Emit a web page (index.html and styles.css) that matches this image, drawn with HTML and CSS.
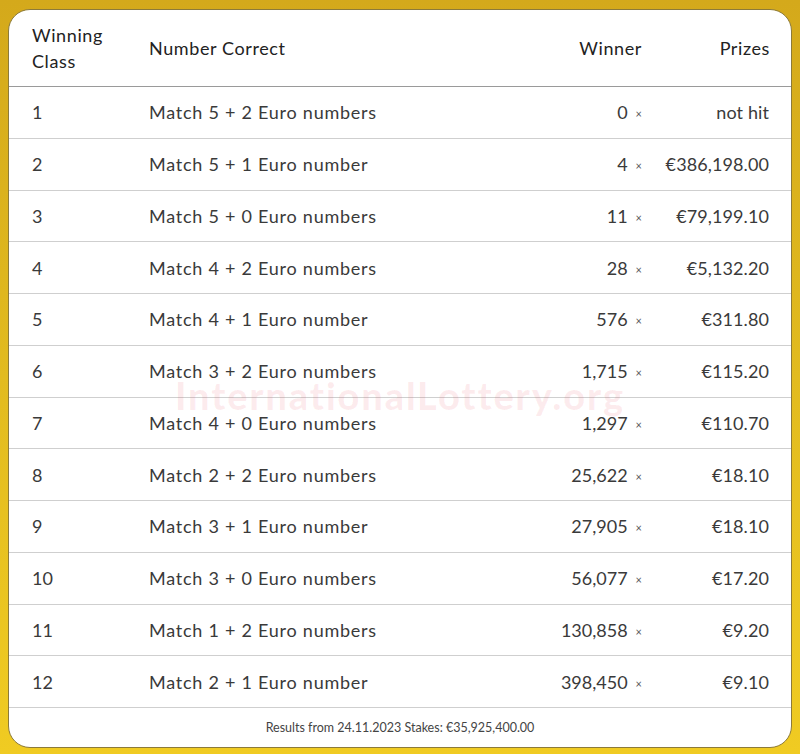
FILE: index.html
```html
<!DOCTYPE html>
<html lang="en">
<head>
<meta charset="utf-8">
<title>EuroJackpot Results</title>
<link rel="stylesheet" href="styles.css">
</head>
<body>
<div class="card">
  <table class="prizes">
    <colgroup>
      <col class="c-class"><col class="c-num"><col class="c-win"><col class="c-prize">
    </colgroup>
    <thead>
      <tr>
        <th class="cls">Winning<br>Class</th>
        <th class="num">Number Correct</th>
        <th class="win">Winner</th>
        <th class="prize">Prizes</th>
      </tr>
    </thead>
    <tbody>
      <tr><td class="cls">1</td><td class="num">Match 5 + 2 Euro numbers</td><td class="win">0<span class="x">×</span></td><td class="prize">not hit</td></tr>
      <tr><td class="cls">2</td><td class="num">Match 5 + 1 Euro number</td><td class="win">4<span class="x">×</span></td><td class="prize">€386,198.00</td></tr>
      <tr><td class="cls">3</td><td class="num">Match 5 + 0 Euro numbers</td><td class="win">11<span class="x">×</span></td><td class="prize">€79,199.10</td></tr>
      <tr><td class="cls">4</td><td class="num">Match 4 + 2 Euro numbers</td><td class="win">28<span class="x">×</span></td><td class="prize">€5,132.20</td></tr>
      <tr><td class="cls">5</td><td class="num">Match 4 + 1 Euro number</td><td class="win">576<span class="x">×</span></td><td class="prize">€311.80</td></tr>
      <tr><td class="cls">6</td><td class="num">Match 3 + 2 Euro numbers</td><td class="win">1,715<span class="x">×</span></td><td class="prize">€115.20</td></tr>
      <tr><td class="cls">7</td><td class="num">Match 4 + 0 Euro numbers</td><td class="win">1,297<span class="x">×</span></td><td class="prize">€110.70</td></tr>
      <tr><td class="cls">8</td><td class="num">Match 2 + 2 Euro numbers</td><td class="win">25,622<span class="x">×</span></td><td class="prize">€18.10</td></tr>
      <tr><td class="cls">9</td><td class="num">Match 3 + 1 Euro number</td><td class="win">27,905<span class="x">×</span></td><td class="prize">€18.10</td></tr>
      <tr><td class="cls">10</td><td class="num">Match 3 + 0 Euro numbers</td><td class="win">56,077<span class="x">×</span></td><td class="prize">€17.20</td></tr>
      <tr><td class="cls">11</td><td class="num">Match 1 + 2 Euro numbers</td><td class="win">130,858<span class="x">×</span></td><td class="prize">€9.20</td></tr>
      <tr><td class="cls">12</td><td class="num">Match 2 + 1 Euro number</td><td class="win">398,450<span class="x">×</span></td><td class="prize">€9.10</td></tr>
    </tbody>
  </table>
  <div class="foot">Results from 24.11.2023 Stakes: €35,925,400.00</div>
  <div class="watermark">InternationalLottery.org</div>
</div>
</body>
</html>
```

FILE: styles.css
```css
html, body {
  margin: 0;
  height: 100%;
}
body {
  background: linear-gradient(180deg, #d4a91b 0%, #e2bb1f 50%, #f0cb22 100%);
  padding: 9px 8px 6px 8px;
  box-sizing: border-box;
  font-family: Lato, "Open Sans", sans-serif;
  color: #333;
}
.card {
  position: relative;
  background: #fff;
  border: 1px solid #8c7a3a;
  border-radius: 22px;
  overflow: hidden;
  height: 739px;
  box-sizing: border-box;
}
.prizes {
  width: 100%;
  border-collapse: collapse;
  table-layout: fixed;
  font-size: 18px;
}
.c-class { width: 140px; }
.c-num { width: auto; }
.c-win { width: 160px; }
.c-prize { width: 139px; }
th {
  font-weight: 400;
  color: #222;
  height: 76px;
  line-height: 26px;
  border-bottom: 1px solid #9a9a9a;
  text-align: left;
  padding: 0;
  letter-spacing: 0.6px;
}
td {
  height: 50.75px;
  border-bottom: 1px solid #cfcfcf;
  padding: 0;
  color: #3a3a3a;
}
td.num { letter-spacing: 0.75px; }
.cls { padding-left: 23px; }
.num { padding-left: 0; }
.win { text-align: right; padding-right: 10px; }
.prize { text-align: right; padding-right: 22px; }
th.prize { padding-right: 21px; }
td.prize { letter-spacing: 0.1px; }
.x {
  font-size: 11px;
  color: #555;
  margin-left: 8px;
  vertical-align: 1px;
}
.foot {
  height: 39px;
  display: flex;
  align-items: center;
  justify-content: center;
  font-size: 12.5px;
  color: #444;
}
.watermark {
  position: absolute;
  left: 0;
  right: 0;
  top: 362px;
  text-align: center;
  font-size: 38px;
  font-weight: 900;
  color: rgba(230, 50, 70, 0.09);
  pointer-events: none;
  letter-spacing: 1.8px;
}
```
